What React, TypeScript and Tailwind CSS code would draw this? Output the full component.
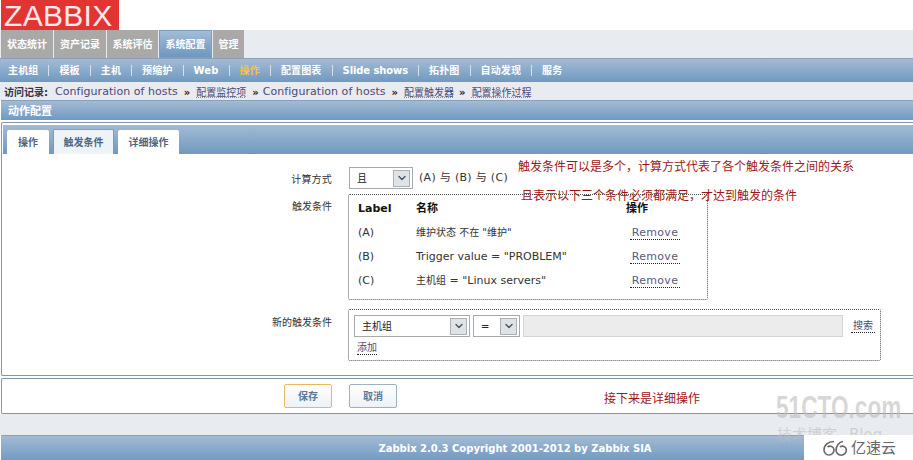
import { ChevronDown } from "lucide-react";

const SANS = "font-['DejaVu_Sans','Noto_Sans_CJK_SC',sans-serif]";

const topTabs = [
  { text: "状态统计", w: "w-[52px]" },
  { text: "资产记录", w: "w-[52px]" },
  { text: "系统评估", w: "w-[51px]" },
  { text: "系统配置", w: "w-[53px]", active: true },
  { text: "管理", w: "w-[31px]" },
];

const subNav = ["主机组", "模板", "主机", "预缩护", "Web", "操作", "配置图表", "Slide shows", "拓扑图", "自动发现", "服务"];

const Select = ({ text, className }: { text: string; className: string }) => (
  <div className={`flex items-center justify-between h-[22px] bg-white border border-[#a9a9a9] pl-[7px] pr-[2px] text-[10px] text-[#222] ${className}`}>
    <span>{text}</span>
    <span className="flex items-center justify-center w-[17px] h-[17px] bg-[#dfe3e6] border border-[#a8b0b8]">
      <ChevronDown className="w-3 h-3 text-[#4a5a6a]" strokeWidth={3} />
    </span>
  </div>
);

const Row = ({ label, children }: { label: string; children: React.ReactNode }) => (
  <div className="flex items-center h-6 text-[11px] text-[#333]">
    <span className="w-[58px]">{label}</span>
    <span className="w-[210px]">{children}</span>
    <a className="ml-1 w-[50px] text-center border-b border-dotted border-[#222] text-[#5a5a7a] leading-[12px] tracking-[0.3px]">Remove</a>
  </div>
);

export default function App() {
  return (
    <div className={`relative w-[913px] h-[460px] overflow-hidden bg-white ${SANS}`}>
      {/* Logo */}
      <div className="h-[30px] pl-px">
        <div className="w-[118px] h-[30px] pt-[2px] bg-[#e33434] text-[#fde8e8] text-[30px] leading-[28px] tracking-[0.3px] pl-[3px] font-['Liberation_Sans',sans-serif]">ZABBIX</div>
      </div>

      {/* Top tabs */}
      <div className="flex h-[28px] pl-px gap-px bg-[#e8ebef]">
        {topTabs.map((t) => (
          <div
            key={t.text}
            className={`flex items-center justify-center text-[10px] font-bold text-white ${t.w} ${t.active ? "bg-gradient-to-b from-[#a3bcd6] to-[#6e98c0] border border-[#7d9cbb]" : "bg-[#aaa9a7]"}`}
          >
            {t.text}
          </div>
        ))}
      </div>

      {/* Sub nav */}
      <div className="flex items-center h-[24px] pl-2 border-t border-[#8a9fb8] bg-gradient-to-b from-[#a3bbd4] to-[#7099c0] text-[10px] font-bold text-white tracking-[0.15px]">
        {subNav.map((s, i) => (
          <div key={s} className="flex items-center">
            {i > 0 && <span className="w-px h-[11px] mx-[10px] bg-[#d5e0ea]" />}
            <span className={s === "操作" ? "text-[#f5c542]" : s === "Slide shows" ? "tracking-[-0.1px]" : ""}>{s}</span>
          </div>
        ))}
      </div>

      {/* Breadcrumb */}
      <div className="flex items-center gap-[6px] h-[18px] pl-1 pt-[2px] bg-[#e8ebef] text-[11px] tracking-[0.05px] text-[#4a4a78]">
        <b className="text-[10px] text-[#334] mr-px tracking-normal">访问记录:</b>
        <span>Configuration of hosts</span>
        <b className="text-[10px] text-[#222]">»</b>
        <span className="text-[10px] tracking-normal underline decoration-dotted decoration-[#8888aa]">配置监控项</span>
        <b className="text-[10px] text-[#222]">»</b>
        <span className="-ml-[2px]">Configuration of hosts</span>
        <b className="text-[10px] text-[#222]">»</b>
        <span className="text-[10px] tracking-normal underline decoration-dotted decoration-[#8888aa]">配置触发器</span>
        <b className="-ml-px text-[10px] text-[#222]">»</b>
        <span className="text-[10px] tracking-normal underline decoration-dotted decoration-[#8888aa]">配置操作过程</span>
      </div>

      {/* Title */}
      <div className="flex items-center h-[20px] pl-[7px] pt-[3px] ml-px border-t border-[#8a9fb8] bg-gradient-to-b from-[#a3bbd4] to-[#7099c0] text-[11px] font-bold text-white">
        动作配置
      </div>

      {/* Form panel */}
      <div className="mt-[2px] ml-px h-[254px] border border-r-0 border-[#8496a8] rounded-l-[2px] pt-[2px]">
        <div className="flex items-end gap-1 h-[29px] pl-1 ml-px bg-gradient-to-b from-[#a3bbd4] to-[#7099c0] text-[10px] font-bold text-[#4d6680]">
          <div className="flex items-center justify-center w-[42px] h-[24px] bg-white rounded-t-[2px]">操作</div>
          <div className="flex items-center justify-center w-[61px] h-[25px] bg-[#eef3f8] border border-b-0 border-[#7d9cbb] rounded-t-[2px]">触发条件</div>
          <div className="flex items-center justify-center w-[61px] h-[24px] bg-white rounded-t-[2px]">详细操作</div>
        </div>

        <div className="grid grid-cols-[330px_1fr] gap-x-[17px] pt-[13px] text-[10px] text-[#333]">
          <div className="text-right pt-[5px] tracking-[0.2px]">计算方式</div>
          <div className="flex items-center gap-[6px]">
            <Select text="且" className="w-[64px]" />
            <span className="text-[11px] tracking-[0.3px]">(A) 与 (B) 与 (C)</span>
          </div>

          <div className="text-right mt-[5px] pt-[5px]">触发条件</div>
          <div className="mt-[5px] w-[360px] h-[106px] -ml-px border border-dotted border-[#555] rounded-[2px] px-[9px] pt-[3px]">
            <div className="flex items-center h-[23px] font-bold text-[#111]">
              <span className="w-[58px] text-[11px]">Label</span>
              <span className="w-[210px] text-[11px]">名称</span>
              <span className="text-[11px]">操作</span>
            </div>
            <Row label="(A)"><span className="text-[10px]">维护状态 不在 "维护"</span></Row>
            <Row label="(B)">Trigger value = "PROBLEM"</Row>
            <Row label="(C)"><span className="text-[10px]">主机组</span> = "Linux servers"</Row>
          </div>

          <div className="text-right mt-[9px] pt-[6px]">新的触发条件</div>
          <div className="mt-[9px] w-[533px] h-[52px] -ml-px border border-dotted border-[#555] rounded-[2px] pl-[5px] pt-[5px]">
            <div className="flex items-center gap-[3px]">
              <Select text="主机组" className="w-[116px]" />
              <Select text="=" className="w-[47px]" />
              <div className="w-[320px] h-[22px] bg-[#ececec] border border-[#d4d4d4]" />
              <a className="ml-[5px] px-[2px] text-[#4a4a78] border-b border-dotted border-[#222] leading-[12px]">搜索</a>
            </div>
            <a className="inline-block mt-[5px] ml-[3px] text-[#4a4a78] border-b border-dotted border-[#222] leading-[12px]">添加</a>
          </div>
        </div>
      </div>

      {/* Buttons */}
      <div className="flex items-center gap-[17px] mt-[2px] ml-px h-[36px] pl-[282px] border border-r-0 border-[#8496a8] rounded-l-[2px] text-[10px] font-bold text-[#5a7a98]">
        <button className="w-[48px] h-[24px] bg-gradient-to-b from-white to-[#eef2f6] border border-[#e8b860] rounded-[2px]">保存</button>
        <button className="w-[48px] h-[24px] bg-gradient-to-b from-white to-[#eef2f6] border border-[#9db0c4] rounded-[2px]">取消</button>
      </div>

      {/* Footer */}
      <div className="h-[21px] bg-[#e8ebef]" />
      <div className="ml-px flex items-center justify-center h-[26px] pl-[116px] border-t border-[#8a9fb8] bg-gradient-to-b from-[#a3bbd4] to-[#7099c0] text-[10px] font-bold text-white">
        Zabbix 2.0.3 Copyright 2001-2012 by Zabbix SIA
      </div>

      {/* Red notes over the screenshot */}
      <div className="absolute left-[518px] top-[159px] text-[12px] leading-[16px] text-[#a01515]">触发条件可以是多个，计算方式代表了各个触发条件之间的关系</div>
      <div className="absolute left-[521px] top-[188px] text-[12px] leading-[16px] text-[#a01515]">且表示以下三个条件必须都满足，才达到触发的条件</div>
      <div className="absolute left-[604px] top-[391px] text-[12px] leading-[16px] text-[#a01515]">接下来是详细操作</div>

      {/* Watermarks */}
      <div className="absolute left-[776px] top-[391px] scale-x-[0.73] origin-left text-[31px] leading-[34px] font-bold text-[#bdbdbd]/60 font-['Liberation_Sans',sans-serif] whitespace-nowrap">51CTO.com</div>
      <div className="absolute left-[777px] top-[426px] text-[15px] leading-[18px] text-[#bdbdbd]/60 whitespace-nowrap">技术博客<span className="ml-3">Blog</span></div>
      <div className="absolute right-0 bottom-0 flex items-center gap-[3px] w-[109px] h-[25px] pl-[19px] bg-white text-[15px] leading-[16px] text-[#666]">
        <svg viewBox="0 0 25 16" className="w-[25px] h-[16px]" fill="none" stroke="#666" strokeWidth="1.6">
          <path d="M11 1.5C5 1.5 1 5 1 10a5 5 0 1 0 10 0a4 4 0 0 0-6.5-3" />
          <path d="M20 1.5C16 2 13 6 13 10a5.2 5.2 0 1 0 10.4 0a4 4 0 0 0-6.5-3" />
        </svg>
        亿速云
      </div>
    </div>
  );
}
